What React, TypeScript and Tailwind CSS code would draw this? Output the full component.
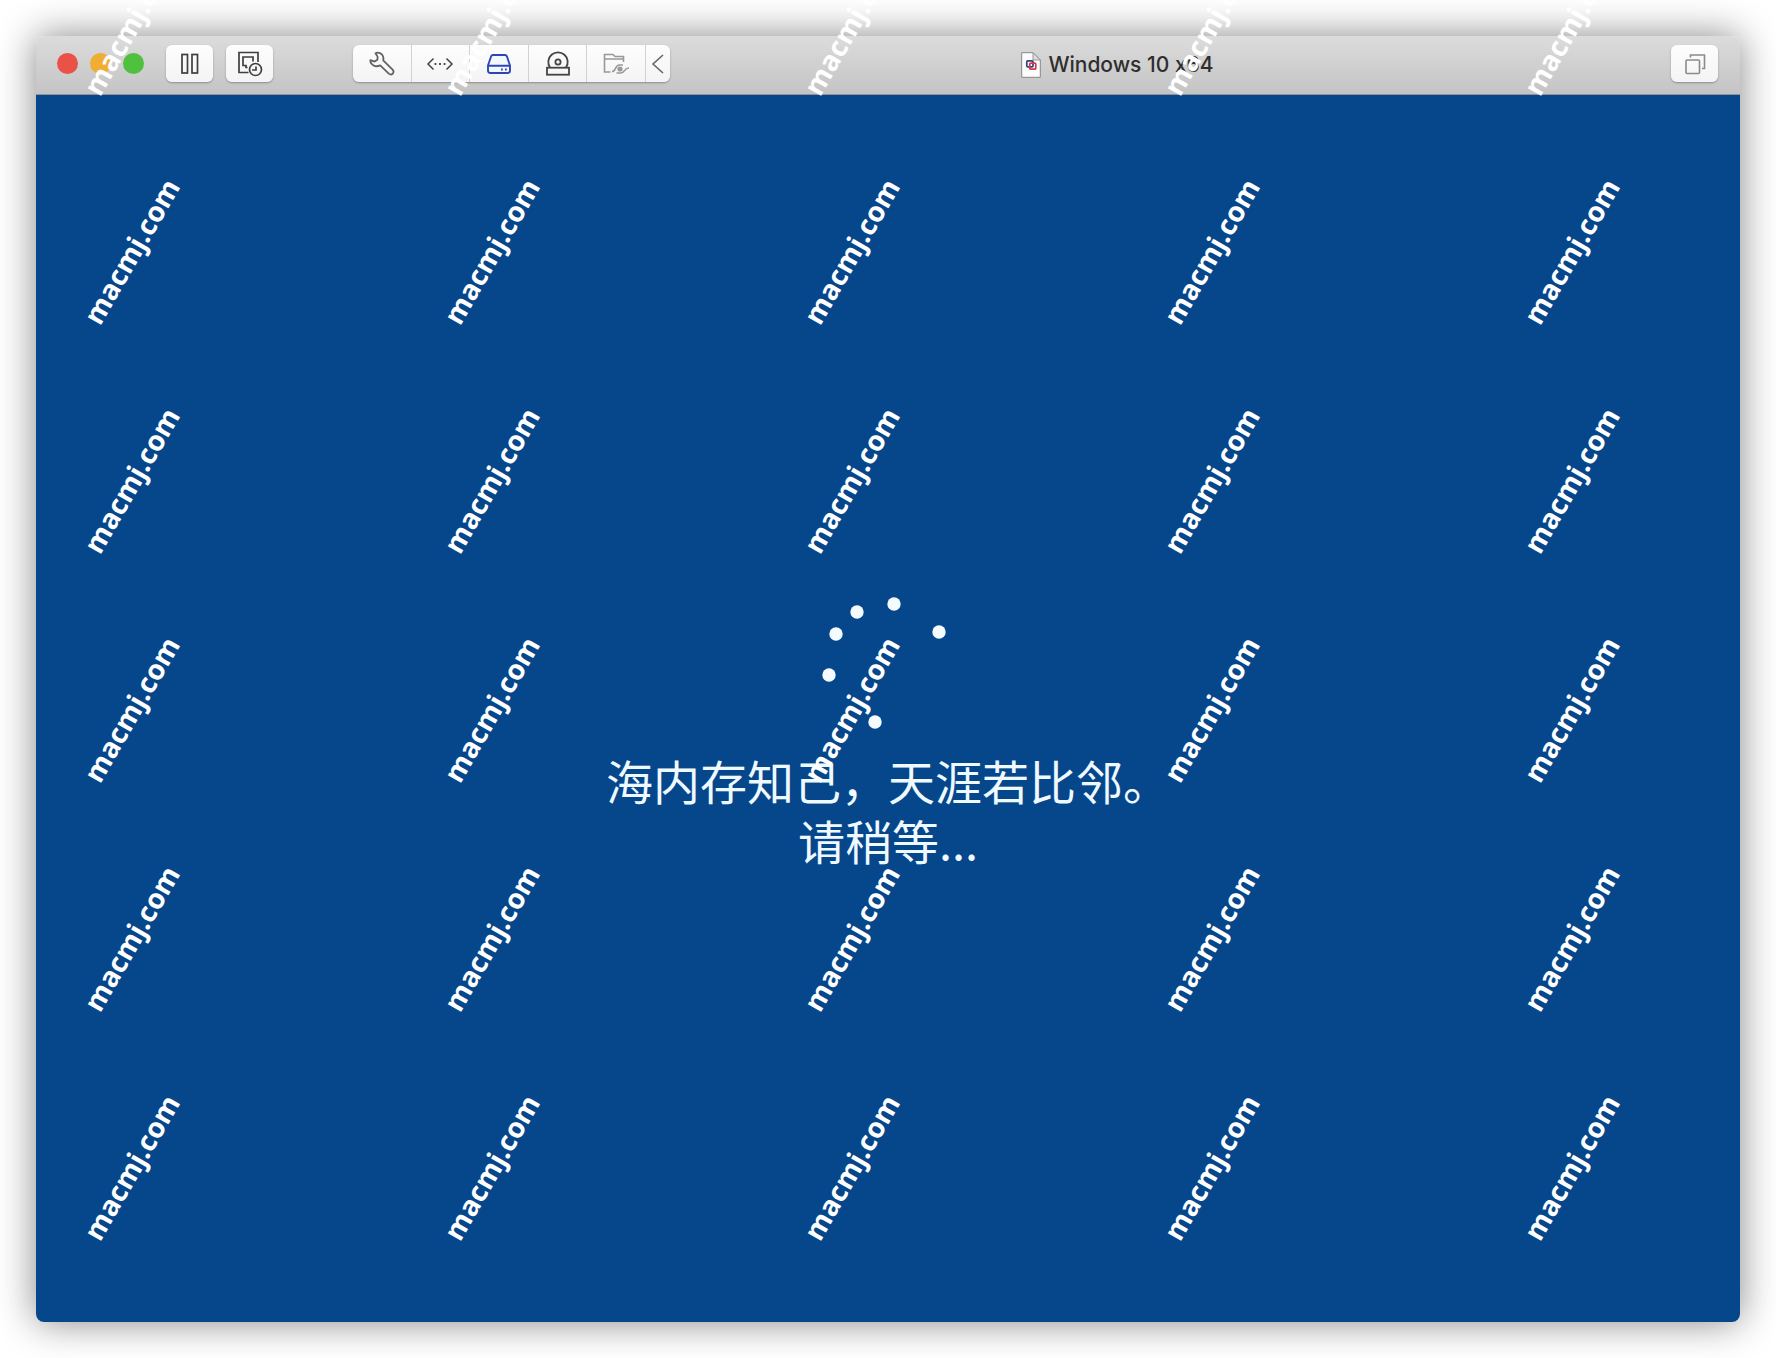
import React from "react";

const rows = [0, 1, 2, 3, 4, 5];
const columns = [0, 1, 2, 3, 4];

function Watermark() {
  return (
    <div className="pointer-events-none absolute inset-0 overflow-hidden" aria-hidden="true">
      <div className="absolute -left-[49px] -top-[93px] grid grid-cols-[repeat(5,360px)] auto-rows-[229px]">
        {rows.map((r) =>
          columns.map((c) => (
            <span key={`${r}-${c}`} className="flex items-center justify-center">
              <span className="-rotate-60 font-['Open_Sans'] text-[28px] leading-none font-bold text-white">
                macmj.com
              </span>
            </span>
          ))
        )}
      </div>
    </div>
  );
}

function ToolButton({ label, children }: { label: string; children: React.ReactNode }) {
  return (
    <button
      type="button"
      aria-label={label}
      className="flex h-[37px] w-[47px] items-center justify-center rounded-md bg-linear-to-b from-[#fdfdfd] to-[#f4f4f4] text-[#3f3f3f] shadow-[0_1px_2px_rgba(0,0,0,0.3)]"
    >
      {children}
    </button>
  );
}

function PauseIcon() {
  return (
    <svg width="20" height="22" viewBox="0 0 20 22" fill="none" stroke="currentColor" strokeWidth="1.7">
      <rect x="2" y="1.5" width="5.5" height="18.5" />
      <rect x="12" y="1.5" width="5.5" height="18.5" />
    </svg>
  );
}

function SnapshotIcon() {
  return (
    <svg width="26" height="26" viewBox="0 0 26 26" fill="none" stroke="currentColor" strokeWidth="1.7">
      <path d="M11.5 21.5H2V1.5H21V11" />
      <path d="M10.5 16.5H9V14.5H6V6H16V10.5" />
      <circle cx="18.5" cy="18.5" r="6" />
      <path d="M19 15.5V19H15" />
    </svg>
  );
}

function WrenchIcon() {
  return (
    <svg width="26" height="26" viewBox="0 0 26 26" fill="none" stroke="#626262" strokeWidth="1.8" strokeLinejoin="round">
      <path d="M6.5 2.2C9.5 .8 13 2.4 14 5.2C14.5 6.6 14.5 8 14.2 9.3L23.6 18.6C26 21.4 22.8 25 19.8 22.6L11.2 14.4C9 15.4 6.4 15.6 4.2 14.2C2.2 13 1.2 11.2 1.4 9.2L5.6 10.6L8.4 8.7L8.6 5.6Z" />
    </svg>
  );
}

function NetworkIcon() {
  return (
    <svg width="28" height="16" viewBox="0 0 28 16" fill="none" stroke="#444" strokeWidth="1.5">
      <path d="M7.5 2.5L2 8L7.5 13.5M20.5 2.5L26 8L20.5 13.5" />
      <path d="M8.6 8H10.4M13.1 8H14.9M17.6 8H19.4" strokeWidth="1.8" />
    </svg>
  );
}

function DiskIcon() {
  return (
    <svg width="26" height="22" viewBox="0 0 26 22" fill="none" stroke="#2d46b4" strokeWidth="1.9" strokeLinejoin="round">
      <path d="M7 2H19Q20.4 2 20.9 3.3L24 12.5V17.5Q24 20 21.5 20H4.5Q2 20 2 17.5V12.5L5.1 3.3Q5.6 2 7 2Z" fill="#f3f7ff" />
      <path d="M2.2 12.8H23.8" />
      <path d="M15 16.5H16.8M19 16.5H20.8" />
    </svg>
  );
}

function CdIcon() {
  return (
    <svg width="26" height="26" viewBox="0 0 26 26" fill="none" stroke="#444" strokeWidth="1.8">
      <path d="M5 16.5A9.7 9.7 0 1 1 21 16.5" />
      <circle cx="13" cy="11" r="2.6" />
      <rect x="2" y="16.7" width="22" height="7" />
    </svg>
  );
}

function SharedFolderIcon() {
  return (
    <svg width="28" height="24" viewBox="0 0 28 24" fill="none" stroke="#999" strokeWidth="1.6">
      <path d="M8.5 20H2.5V2.5H11L13 4.5H21.5V10M3 7H21.5" />
      <path d="M10 19.5C14.5 19.5 12.5 13 17.5 13H21M14.5 21H18.5C23.5 21 21.5 16 27 16" />
      <circle cx="18" cy="17" r="1.8" fill="#999" />
    </svg>
  );
}

function ChevronIcon() {
  return (
    <svg width="14" height="22" viewBox="0 0 14 22" fill="none" stroke="#666" strokeWidth="1.6">
      <path d="M12 2L2 11L12 20" />
    </svg>
  );
}

function UnityIcon() {
  return (
    <svg width="22" height="22" viewBox="0 0 22 22" fill="none" stroke="#8a8a8a" strokeWidth="1.6">
      <rect x="2" y="7" width="13.5" height="13.5" rx="1" />
      <path d="M6.5 4.5V2H20.5V15.5H18" />
    </svg>
  );
}

function DocumentIcon() {
  return (
    <svg width="20" height="26" viewBox="0 0 20 26" fill="none">
      <path d="M.7.7H12L19.3 8V25.3H.7Z" fill="#fcfcfc" stroke="#888" />
      <path d="M12 .7V8H19.3Z" fill="#ddd" stroke="#999" />
      <rect x="5.8" y="8.8" width="6.2" height="6" rx="1" stroke="#34407e" strokeWidth="1.7" />
      <rect x="8.8" y="11.2" width="6" height="6" rx="1" stroke="#cf3b4a" strokeWidth="1.7" />
    </svg>
  );
}

const devices = [
  { label: "Settings", icon: <WrenchIcon /> },
  { label: "Network adapter", icon: <NetworkIcon /> },
  { label: "Hard disk", icon: <DiskIcon /> },
  { label: "CD/DVD", icon: <CdIcon /> },
  { label: "Shared folders", icon: <SharedFolderIcon /> },
];

const dots = [
  [72, 7],
  [117, 35],
  [35, 15],
  [14, 37],
  [7, 78],
  [53, 125],
];

export default function App() {
  return (
    <div className="relative flex min-h-screen flex-col bg-white p-9">
      <div className="flex flex-1 flex-col overflow-hidden rounded-lg shadow-[0_0_38px_rgba(0,0,0,0.48)]">
        <header className="flex h-[59px] items-center border-b border-[#8f9298] bg-linear-to-b from-[#dcdcdc] to-[#c4c4c4] pr-[22px] pb-[3px] pl-[21px]">
          <div className="flex gap-3">
            <button type="button" aria-label="Close" className="size-[21px] rounded-full bg-[#ea5247]" />
            <button type="button" aria-label="Minimize" className="size-[21px] rounded-full bg-[#efae33]" />
            <button type="button" aria-label="Zoom" className="size-[21px] rounded-full bg-[#4fc13f]" />
          </div>
          <div className="ml-[22px] flex gap-[13px]">
            <ToolButton label="Pause">
              <PauseIcon />
            </ToolButton>
            <ToolButton label="Snapshots">
              <SnapshotIcon />
            </ToolButton>
          </div>
          <div className="ml-20 flex h-[37px] overflow-hidden rounded-md bg-linear-to-b from-[#fdfdfd] to-[#f4f4f4] shadow-[0_1px_2px_rgba(0,0,0,0.3)]">
            <div className="grid w-[293px] grid-cols-5">
              {devices.map((d) => (
                <button
                  key={d.label}
                  type="button"
                  aria-label={d.label}
                  className="flex items-center justify-center border-r border-[#d2d2d2]"
                >
                  {d.icon}
                </button>
              ))}
            </div>
            <button type="button" aria-label="Collapse" className="flex w-6 items-center justify-center">
              <ChevronIcon />
            </button>
          </div>
          <div className="flex flex-1 items-center justify-center gap-[7px] pt-[3px] pr-[106px]">
            <DocumentIcon />
            <h1 className="font-['Inter'] text-[21px] leading-7 font-medium whitespace-nowrap text-[#2e2e2e] [font-feature-settings:'calt'_0]">
              Windows 10 x64
            </h1>
          </div>
          <ToolButton label="Unity view">
            <UnityIcon />
          </ToolButton>
        </header>
        <main className="flex flex-1 flex-col items-center justify-center gap-[21px] bg-[#06468b] pt-[50px]">
          <svg width="132" height="132" viewBox="0 0 132 132" role="img" aria-label="Loading">
            {dots.map(([x, y]) => (
              <circle key={`${x}-${y}`} cx={x} cy={y} r="6.7" fill="#f4fbff" />
            ))}
          </svg>
          <p className="text-center font-['Noto_Sans_CJK_SC',sans-serif] text-[47px] leading-[60px] text-[#eefaff]">
            海内存知己，天涯若比邻。
            <br />
            请稍等...
          </p>
        </main>
      </div>
      <Watermark />
    </div>
  );
}
